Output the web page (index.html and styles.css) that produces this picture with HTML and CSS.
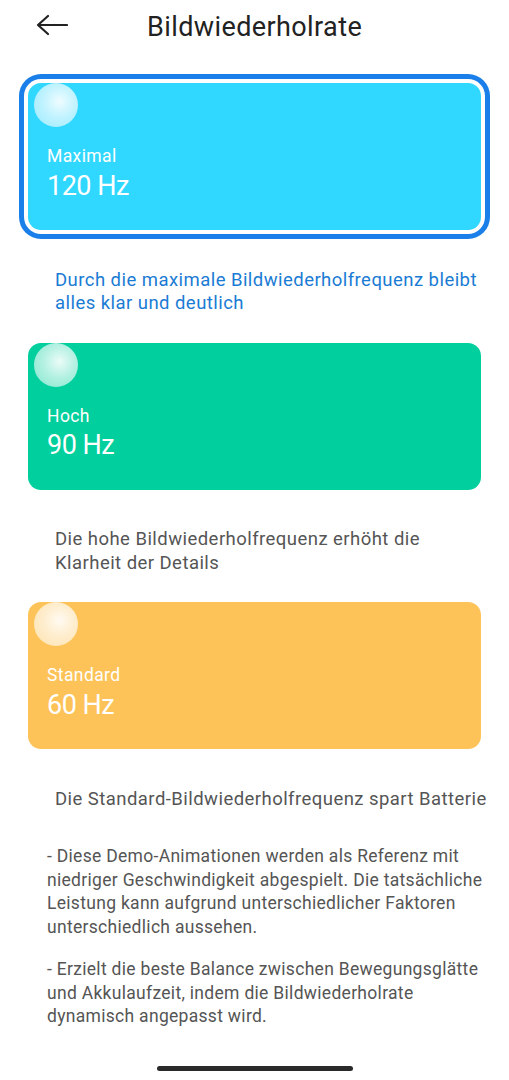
FILE: index.html
```html
<!DOCTYPE html>
<html lang="de">
<head>
<meta charset="utf-8">
<title>Bildwiederholrate</title>
<link rel="stylesheet" href="styles.css">
</head>
<body>
<header class="topbar">
  <button class="back" aria-label="Zurück">
    <svg width="32" height="24" viewBox="0 0 32 24"><path d="M12 3 L2 12 L12 21 M2 12 H31" fill="none" stroke="#222" stroke-width="2.2" stroke-linecap="round" stroke-linejoin="round"/></svg>
  </button>
  <h1 class="title">Bildwiederholrate</h1>
</header>
<main class="content">
  <section class="mode">
    <div class="card card-max selected">
      <span class="orb"></span>
      <div class="card-label">Maximal</div>
      <div class="card-value">120 Hz</div>
    </div>
    <p class="mode-desc active">Durch die maximale Bildwiederholfrequenz bleibt alles klar und deutlich</p>
  </section>
  <section class="mode">
    <div class="card card-high">
      <span class="orb"></span>
      <div class="card-label">Hoch</div>
      <div class="card-value">90 Hz</div>
    </div>
    <p class="mode-desc">Die hohe Bildwiederholfrequenz erhöht die Klarheit der Details</p>
  </section>
  <section class="mode">
    <div class="card card-std">
      <span class="orb"></span>
      <div class="card-label">Standard</div>
      <div class="card-value">60 Hz</div>
    </div>
    <p class="mode-desc">Die Standard-Bildwiederholfrequenz spart Batterie</p>
  </section>
  <div class="notes">
    <p>- Diese Demo-Animationen werden als Referenz mit niedriger Geschwindigkeit abgespielt. Die tatsächliche Leistung kann aufgrund unterschiedlicher Faktoren unterschiedlich aussehen.</p>
    <p>- Erzielt die beste Balance zwischen Bewegungsglätte und Akkulaufzeit, indem die Bildwiederholrate dynamisch angepasst wird.</p>
  </div>
</main>
<div class="home-bar"></div>
</body>
</html>
```
FILE: styles.css
```css
* { box-sizing: border-box; }
html, body { margin: 0; padding: 0; }
body {
  width: 509px;
  height: 1080px;
  background: #fff;
  font-family: Roboto, "Noto Sans", sans-serif;
  color: #333;
  display: flex;
  flex-direction: column;
  overflow: hidden;
}
body > * { flex-shrink: 0; }
.topbar {
  height: 54px;
  display: flex;
  align-items: center;
  padding-left: 36px;
}
.back {
  border: 0;
  background: none;
  padding: 0;
  width: 32px;
  height: 24px;
  display: flex;
  align-self: flex-start;
  margin-top: 13px;
}
.title {
  margin: 0 0 0 79px;
  font-size: 27px;
  line-height: 32px;
  letter-spacing: 0.4px;
  font-weight: 400;
  color: #222;
}
.content {
  padding: 29px 28px 0 28px;
}
.mode { display: flex; flex-direction: column; }
.card {
  flex-shrink: 0;
  width: 453px;
  height: 147px;
  border-radius: 13px;
  padding: 0 19px;
  color: #fff;
}
.card.selected {
  box-shadow: 0 0 0 4px #fff, 0 0 0 9px #1a7fe8;
}
.card-max { background: #30d7ff; }
.card-high { background: #01cf9d; }
.card-std { background: #fdc358; }
.orb {
  display: block;
  width: 44px;
  height: 44px;
  margin-left: -13px;
  border-radius: 50%;
  background: radial-gradient(circle at 58% 42%, rgba(255,255,255,0.92) 0%, rgba(255,255,255,0.7) 45%, rgba(255,255,255,0.5) 100%);
}
.card-label {
  margin-top: 18.4px;
  font-size: 17.5px;
  line-height: 22px;
  letter-spacing: 0.4px;
}
.card-value {
  margin-top: 1.6px;
  font-size: 27px;
  line-height: 34px;
  letter-spacing: -0.5px;
}
.mode-desc {
  margin: 38.5px -8px 27px 27px;
  font-size: 18.5px;
  line-height: 23.5px;
  letter-spacing: 0.45px;
  color: #555;
}
.mode-desc.active { color: #1a7bd4; }
.notes {
  margin: 0 -12px 0 19px;
  padding-top: 7.4px;
}
.notes p {
  margin: 0 0 19.4px 0;
  font-size: 17.5px;
  line-height: 23.4px;
  letter-spacing: 0.3px;
  color: #555;
}
.home-bar {
  margin: auto auto 9px auto;
  width: 196px;
  height: 5px;
  border-radius: 3px;
  background: #2a2a2a;
}
```
